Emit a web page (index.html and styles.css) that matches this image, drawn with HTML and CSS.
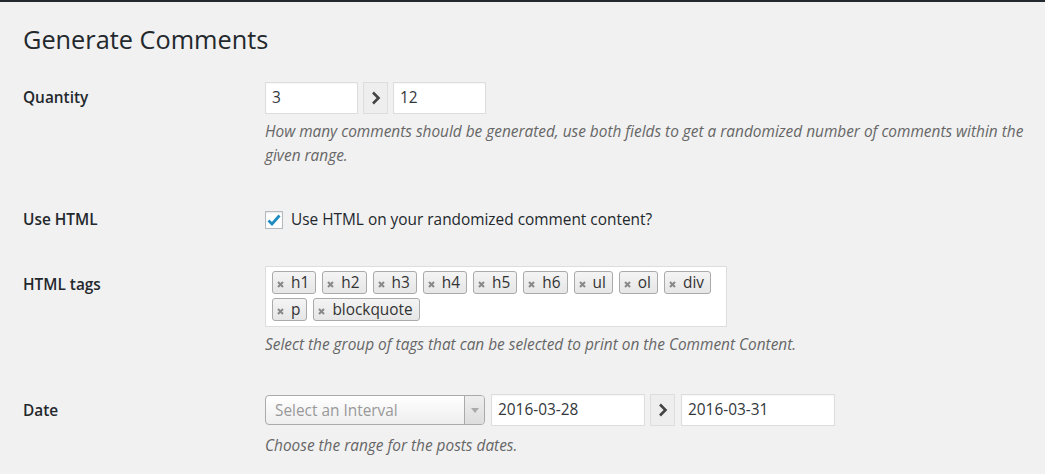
FILE: index.html
```html
<!DOCTYPE html>
<html>
<head>
<meta charset="utf-8">
<link rel="stylesheet" href="styles.css">
</head>
<body>
<div class="topbar"></div>
<div class="wrap">
  <h1 class="title">Generate Comments</h1>
  <div class="form">
    <div class="row row-qty">
      <div class="label">Quantity</div>
      <div class="field">
        <div class="inline">
          <div class="input small">3</div>
          <div class="arrow"><svg width="10" height="14" viewBox="0 0 10 14"><path d="M2 1.5 L7.5 7 L2 12.5" fill="none" stroke="#444" stroke-width="2.6"/></svg></div>
          <div class="input small">12</div>
        </div>
        <p class="desc">How many comments should be generated, use both fields to get a randomized number of comments within the given range.</p>
      </div>
    </div>
    <div class="row row-html">
      <div class="label">Use HTML</div>
      <div class="field">
        <label class="check">
          <span class="box"><svg width="14" height="12" viewBox="0 0 14 12"><path d="M1.5 6.5 L5 10 L12.5 1.5" fill="none" stroke="#1e8cbe" stroke-width="2.8"/></svg></span>
          <span>Use HTML on your randomized comment content?</span>
        </label>
      </div>
    </div>
    <div class="row row-tags">
      <div class="label">HTML tags</div>
      <div class="field">
        <div class="tags">
          <span class="tag"><svg class="x" width="7" height="7" viewBox="0 0 7 7"><path d="M1 1 L6 6 M6 1 L1 6" stroke="#888" stroke-width="2"/></svg>h1</span>
          <span class="tag"><svg class="x" width="7" height="7" viewBox="0 0 7 7"><path d="M1 1 L6 6 M6 1 L1 6" stroke="#888" stroke-width="2"/></svg>h2</span>
          <span class="tag"><svg class="x" width="7" height="7" viewBox="0 0 7 7"><path d="M1 1 L6 6 M6 1 L1 6" stroke="#888" stroke-width="2"/></svg>h3</span>
          <span class="tag"><svg class="x" width="7" height="7" viewBox="0 0 7 7"><path d="M1 1 L6 6 M6 1 L1 6" stroke="#888" stroke-width="2"/></svg>h4</span>
          <span class="tag"><svg class="x" width="7" height="7" viewBox="0 0 7 7"><path d="M1 1 L6 6 M6 1 L1 6" stroke="#888" stroke-width="2"/></svg>h5</span>
          <span class="tag"><svg class="x" width="7" height="7" viewBox="0 0 7 7"><path d="M1 1 L6 6 M6 1 L1 6" stroke="#888" stroke-width="2"/></svg>h6</span>
          <span class="tag"><svg class="x" width="7" height="7" viewBox="0 0 7 7"><path d="M1 1 L6 6 M6 1 L1 6" stroke="#888" stroke-width="2"/></svg>ul</span>
          <span class="tag"><svg class="x" width="7" height="7" viewBox="0 0 7 7"><path d="M1 1 L6 6 M6 1 L1 6" stroke="#888" stroke-width="2"/></svg>ol</span>
          <span class="tag"><svg class="x" width="7" height="7" viewBox="0 0 7 7"><path d="M1 1 L6 6 M6 1 L1 6" stroke="#888" stroke-width="2"/></svg>div</span>
          <span class="tag"><svg class="x" width="7" height="7" viewBox="0 0 7 7"><path d="M1 1 L6 6 M6 1 L1 6" stroke="#888" stroke-width="2"/></svg>p</span>
          <span class="tag"><svg class="x" width="7" height="7" viewBox="0 0 7 7"><path d="M1 1 L6 6 M6 1 L1 6" stroke="#888" stroke-width="2"/></svg>blockquote</span>
        </div>
        <p class="desc">Select the group of tags that can be selected to print on the Comment Content.</p>
      </div>
    </div>
    <div class="row row-date">
      <div class="label">Date</div>
      <div class="field">
        <div class="inline">
          <div class="select"><span class="ph">Select an Interval</span><span class="drop"><svg width="8" height="5" viewBox="0 0 8 5"><path d="M0 0 H8 L4 5 Z" fill="#aaa"/></svg></span></div>
          <div class="input date">2016-03-28</div>
          <div class="arrow"><svg width="10" height="14" viewBox="0 0 10 14"><path d="M2 1.5 L7.5 7 L2 12.5" fill="none" stroke="#444" stroke-width="2.6"/></svg></div>
          <div class="input date">2016-03-31</div>
        </div>
        <p class="desc desc-date">Choose the range for the posts dates.</p>
      </div>
    </div>
  </div>
</div>
</body>
</html>
```
FILE: styles.css
```css
html, body {
  margin: 0;
  padding: 0;
  background: #f1f1f1;
  font-family: "Open Sans", "Liberation Sans", sans-serif;
  font-size: 15.4px;
  color: #23282d;
}
.topbar {
  height: 2px;
  background: #23282d;
}
.wrap {
  padding: 0 0 0 23px;
}
.title {
  margin: 0;
  padding: 20px 0 0 0;
  font-size: 25.3px;
  font-weight: 400;
  line-height: 34px;
  color: #23282d;
}
.row {
  display: grid;
  grid-template-columns: 242px 1fr;
}
.label {
  font-weight: 600;
  line-height: 20px;
}
.field {
  padding-right: 10px;
}
.row-qty { padding-top: 26px; }
.row-qty .label { padding-top: 6px; }
.row-html { padding-top: 42px; }
.row-html .label { padding-top: 0; }
.row-tags { padding-top: 36px; }
.row-tags .label { padding-top: 9px; }
.row-date { padding-top: 37px; }
.row-date .label { padding-top: 7px; }

.inline {
  display: flex;
  gap: 5px;
  align-items: center;
}
.input {
  box-sizing: border-box;
  height: 32px;
  border: 1px solid #ddd;
  background: #fff;
  padding: 0 6px;
  line-height: 30px;
  color: #32373c;
  box-shadow: inset 0 1px 2px rgba(0,0,0,0.04);
}
.input.small { width: 93px; }
.input.date { width: 154px; margin-left: 1px; }
.arrow {
  box-sizing: border-box;
  width: 25px;
  height: 32px;
  border: 1px solid #ddd;
  background: #eee;
  display: flex;
  align-items: center;
  justify-content: center;
}
.desc {
  margin: 6px 0 0 0;
  font-style: italic;
  color: #666;
  line-height: 24px;
}
.desc-date {
  margin-top: 8px;
}
.check {
  display: flex;
  align-items: center;
  gap: 8px;
  line-height: 20px;
}
.box {
  box-sizing: border-box;
  width: 18px;
  height: 18px;
  border: 1px solid #b4b9be;
  background: #fff;
  display: flex;
  align-items: center;
  justify-content: center;
  box-shadow: inset 0 1px 2px rgba(0,0,0,0.1);
}
.tags {
  box-sizing: border-box;
  width: 462px;
  border: 1px solid #ddd;
  background: #fff;
  padding: 0 0 5px 0;
  display: flex;
  flex-wrap: wrap;
}
.tag {
  box-sizing: border-box;
  height: 23px;
  margin: 4px 0 0 6px;
  padding: 0 6px 0 4px;
  border: 1px solid #aaa;
  border-radius: 3px;
  background: linear-gradient(#f4f4f4, #e6e6e6);
  line-height: 20px;
  color: #333;
  display: inline-flex;
  align-items: center;
}
.x {
  margin: 3px 7px 0 0;
  flex: none;
}
.select {
  box-sizing: border-box;
  width: 220px;
  height: 30px;
  border: 1px solid #aaa;
  border-radius: 4px;
  background: linear-gradient(#fff, #eee);
  display: flex;
  align-items: center;
  color: #999;
}
.ph {
  flex: 1;
  padding-left: 9px;
}
.drop {
  width: 19px;
  height: 100%;
  border-left: 1px solid #aaa;
  background: linear-gradient(#eee, #ddd);
  border-radius: 0 3px 3px 0;
  display: flex;
  align-items: center;
  justify-content: center;
}
```
